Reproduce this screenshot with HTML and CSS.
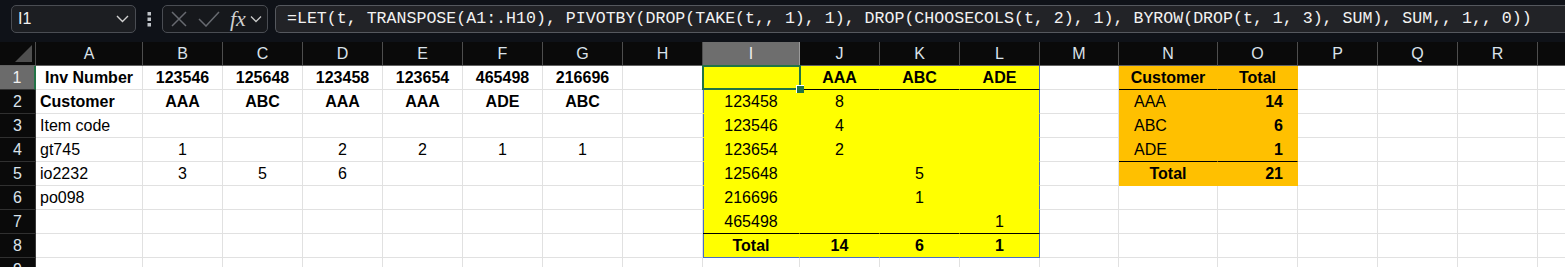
FILE: index.html
```html
<!DOCTYPE html>
<html lang="en">
  <head>
    <meta charset="UTF-8" />
    <meta name="viewport" content="width=device-width, initial-scale=1.0" />
    <title>PIVOTBY sheet</title>
    <link rel="stylesheet" href="styles.css">
  </head>

  <body>
    <div class="formula-bar">
      <div class="name-box">
        <span>I1</span>
        <svg width="13" height="8" viewBox="0 0 13 8"><polyline points="1,1 6.5,6.5 12,1" fill="none" stroke="#d0d0d0" stroke-width="1.4"/></svg>
      </div>
      <svg class="dots" width="5" height="15" viewBox="0 0 5 15">
        <rect x="0.5" y="0" width="3.5" height="3.5" fill="#bfc3c8"/>
        <rect x="0.5" y="5.5" width="3.5" height="3.5" fill="#bfc3c8"/>
        <rect x="0.5" y="11" width="3.5" height="3.5" fill="#bfc3c8"/>
      </svg>
      <div class="fx-box">
        <svg width="16" height="16" viewBox="0 0 16 16"><path d="M1 1 L15 15 M15 1 L1 15" stroke="#676a70" stroke-width="1.5"/></svg>
        <svg class="check" width="22" height="16" viewBox="0 0 22 16"><polyline points="1,8 8,15 21,1" fill="none" stroke="#676a70" stroke-width="1.5"/></svg>
        <span class="fx">fx</span>
        <svg width="12" height="8" viewBox="0 0 12 8"><polyline points="1,1.5 6,6.5 11,1.5" fill="none" stroke="#c8c8c8" stroke-width="1.3"/></svg>
      </div>
      <div class="formula">=LET(t, TRANSPOSE(A1:.H10), PIVOTBY(DROP(TAKE(t,, 1), 1), DROP(CHOOSECOLS(t, 2), 1), BYROW(DROP(t, 1, 3), SUM), SUM,, 1,, 0))</div>
    </div>

    <div class="sheet">
      <div class="row head">
        <div class="corner"></div>
        <div>A</div><div>B</div><div>C</div><div>D</div><div>E</div><div>F</div><div>G</div><div>H</div>
        <div class="active">I</div><div>J</div><div>K</div><div>L</div><div>M</div><div>N</div>
        <div>O</div><div>P</div><div>Q</div><div>R</div><div></div>
      </div>

      <div class="row">
        <div class="num active">1</div>
        <div class="b c">Inv Number</div>
        <div class="b c">123546</div><div class="b c">125648</div><div class="b c">123458</div>
        <div class="b c">123654</div><div class="b c">465498</div><div class="b c">216696</div>
        <div></div>
        <div class="y sl line sel"></div>
        <div class="y b c line">AAA</div><div class="y b c line">ABC</div><div class="y b c line sr">ADE</div>
        <div></div>
        <div class="o b c line">Customer</div><div class="o b c line">Total</div>
        <div></div><div></div><div></div><div></div>
      </div>

      <div class="row">
        <div class="num">2</div>
        <div class="b">Customer</div>
        <div class="b c">AAA</div><div class="b c">ABC</div><div class="b c">AAA</div>
        <div class="b c">AAA</div><div class="b c">ADE</div><div class="b c">ABC</div>
        <div></div>
        <div class="y sl c">123458</div><div class="y c">8</div><div class="y"></div><div class="y sr"></div>
        <div></div>
        <div class="o pl">AAA</div><div class="o b r">14</div>
        <div></div><div></div><div></div><div></div>
      </div>

      <div class="row">
        <div class="num">3</div>
        <div>Item code</div>
        <div></div><div></div><div></div><div></div><div></div><div></div>
        <div></div>
        <div class="y sl c">123546</div><div class="y c">4</div><div class="y"></div><div class="y sr"></div>
        <div></div>
        <div class="o pl">ABC</div><div class="o b r">6</div>
        <div></div><div></div><div></div><div></div>
      </div>

      <div class="row">
        <div class="num">4</div>
        <div>gt745</div>
        <div class="c">1</div><div></div><div class="c">2</div><div class="c">2</div><div class="c">1</div><div class="c">1</div>
        <div></div>
        <div class="y sl c">123654</div><div class="y c">2</div><div class="y"></div><div class="y sr"></div>
        <div></div>
        <div class="o pl line">ADE</div><div class="o b r line">1</div>
        <div></div><div></div><div></div><div></div>
      </div>

      <div class="row">
        <div class="num">5</div>
        <div>io2232</div>
        <div class="c">3</div><div class="c">5</div><div class="c">6</div><div></div><div></div><div></div>
        <div></div>
        <div class="y sl c">125648</div><div class="y"></div><div class="y c">5</div><div class="y sr"></div>
        <div></div>
        <div class="o b c">Total</div><div class="o b r">21</div>
        <div></div><div></div><div></div><div></div>
      </div>

      <div class="row">
        <div class="num">6</div>
        <div>po098</div>
        <div></div><div></div><div></div><div></div><div></div><div></div>
        <div></div>
        <div class="y sl c">216696</div><div class="y"></div><div class="y c">1</div><div class="y sr"></div>
        <div></div>
        <div></div><div></div>
        <div></div><div></div><div></div><div></div>
      </div>

      <div class="row">
        <div class="num">7</div>
        <div></div>
        <div></div><div></div><div></div><div></div><div></div><div></div>
        <div></div>
        <div class="y sl c line">465498</div><div class="y line"></div><div class="y line"></div><div class="y c sr line">1</div>
        <div></div>
        <div></div><div></div>
        <div></div><div></div><div></div><div></div>
      </div>

      <div class="row">
        <div class="num">8</div>
        <div></div>
        <div></div><div></div><div></div><div></div><div></div><div></div>
        <div></div>
        <div class="y sl b c sb">Total</div><div class="y b c sb">14</div><div class="y b c sb">6</div><div class="y b c sr sb">1</div>
        <div></div>
        <div></div><div></div>
        <div></div><div></div><div></div><div></div>
      </div>

      <div class="row">
        <div class="num">9</div>
        <div></div>
        <div></div><div></div><div></div><div></div><div></div><div></div>
        <div></div>
        <div></div><div></div><div></div><div></div>
        <div></div>
        <div></div><div></div>
        <div></div><div></div><div></div><div></div>
      </div>
    </div>
  </body>
</html>
```

FILE: styles.css
```css
* {
  padding: 0;
  margin: 0;
  box-sizing: border-box;
}

body {
  width: 1565px;
  height: 267px;
  overflow: hidden;
  background: white;
  font-family: "Liberation Sans", Arial, sans-serif;
}

/* formula bar */

.formula-bar {
  height: 42px;
  background: #0f1218;
  display: flex;
  align-items: flex-start;
  padding: 5px 0 0 11px;
}

.name-box {
  width: 125px;
  height: 28px;
  border: 1px solid #4a4d53;
  border-radius: 5px;
  background: #1c1e22;
  color: #f2f2f2;
  font-size: 16px;
  display: flex;
  align-items: center;
  justify-content: space-between;
  padding: 0 6px 0 6px;
}

.dots {
  margin: 7px 10px 0 11px;
}

.fx-box {
  width: 106px;
  height: 28px;
  border: 1px solid #4a4d53;
  border-radius: 5px;
  background: #16181c;
  display: flex;
  align-items: center;
  padding-left: 8px;
}

.fx-box .check {
  margin-left: 11px;
}

.fx-box .fx {
  font-family: "Liberation Serif", serif;
  font-style: italic;
  font-size: 22px;
  color: #cfcfcf;
  margin: 0 4px 0 10px;
  line-height: 26px;
}

.formula {
  flex: 1;
  margin-left: 7px;
  height: 28px;
  border: 1px solid #55585e;
  border-right: none;
  border-radius: 5px 0 0 5px;
  background: #222327;
  color: #f2f2f2;
  font-family: "Liberation Mono", "DejaVu Sans Mono", monospace;
  font-size: 16.6px;
  line-height: 26px;
  padding-left: 11px;
  white-space: nowrap;
  overflow: hidden;
}

/* grid */

.sheet {
  --cols: 36px 107px repeat(7, 80px) 97px repeat(3, 80px) 79px 99px repeat(5, 80px);
}

.row {
  display: grid;
  grid-template-columns: var(--cols);
  height: 24px;
}

.row > div {
  border-right: 1px solid #e1e1e1;
  border-bottom: 1px solid #e1e1e1;
  font-size: 16px;
  line-height: 23px;
  padding: 0 4px;
  white-space: nowrap;
  color: black;
}

.row.head > div {
  background: #0a0a0a;
  color: #dbe3eb;
  text-align: center;
  border-right: 1px solid #4e4e4e;
  border-bottom: 1px solid #626262;
}

.row.head > div.active {
  background: #6e6e6e;
  color: #f0f0f0;
  border-right-color: #9a9a9a;
}

.corner {
  position: relative;
}

.corner::after {
  content: "";
  position: absolute;
  right: 3px;
  bottom: 3px;
  width: 17px;
  height: 17px;
  background: #4f4f4f;
  clip-path: polygon(100% 0, 100% 100%, 0 100%);
}

.row > .num {
  background: #0a0a0a;
  color: #dbe3eb;
  text-align: center;
  border-right: 1px solid #3a3a3a;
  border-bottom: 1px solid #303030;
}

.row > .num.active {
  background: #6b6b6b;
  color: #f0f0f0;
  border-right: 2px solid #217346;
}

.b {
  font-weight: bold;
}

.c {
  text-align: center;
}

.r {
  text-align: right;
  padding-right: 14px !important;
}

.pl {
  padding-left: 15px !important;
}

/* pivot spill */

.row > .y {
  background: #ffff00;
  border-color: #ffff00;
}

.row > .sl {
  box-shadow: inset 1px 0 0 #4a6fc4;
}

.row > .sr {
  border-right-color: #4a6fc4;
}

.row > .sb {
  border-bottom-color: #4a6fc4;
}

/* summary table */

.row > .o {
  background: #ffc000;
  border-color: #ffc000;
}

.row > .line {
  border-bottom-color: black;
}

/* active cell */

.sel {
  position: relative;
}

.sel::after {
  content: "";
  position: absolute;
  top: -1px;
  left: -1px;
  right: -2px;
  bottom: -1px;
  border: 2px solid #217346;
  z-index: 2;
}

.sel::before {
  content: "";
  position: absolute;
  right: -5px;
  bottom: -4px;
  width: 7px;
  height: 7px;
  background: #217346;
  border-left: 1px solid white;
  border-top: 1px solid white;
  z-index: 3;
}
```
